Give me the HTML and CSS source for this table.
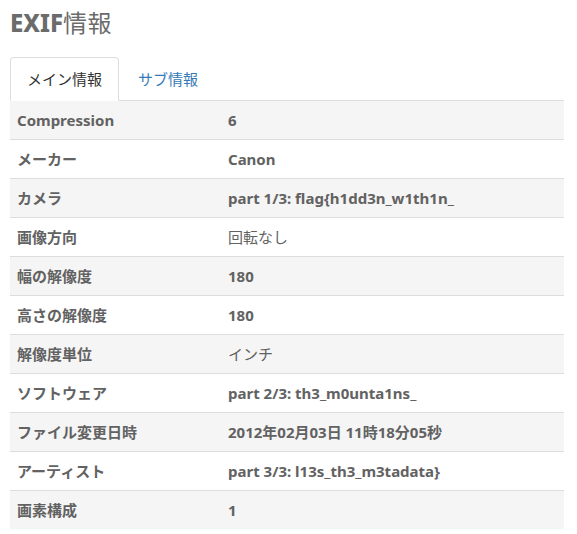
FILE: index.html
```html
<!DOCTYPE html>
<html lang="ja">
<head>
<meta charset="utf-8">
<link rel="stylesheet" href="styles.css">
</head>
<body>
<div class="page">
  <h2 class="title"><span class="latin">EXIF</span><span class="cjk">情報</span></h2>
  <ul class="tabs">
    <li class="tab active">メイン情報</li>
    <li class="tab link">サブ情報</li>
  </ul>
  <div class="table">
    <div class="row"><div class="k">Compression</div><div class="v">6</div></div>
    <div class="row"><div class="k">メーカー</div><div class="v">Canon</div></div>
    <div class="row"><div class="k">カメラ</div><div class="v">part 1/3: flag{h1dd3n_w1th1n_</div></div>
    <div class="row"><div class="k">画像方向</div><div class="v light">回転なし</div></div>
    <div class="row"><div class="k">幅の解像度</div><div class="v">180</div></div>
    <div class="row"><div class="k">高さの解像度</div><div class="v">180</div></div>
    <div class="row"><div class="k">解像度単位</div><div class="v light">インチ</div></div>
    <div class="row"><div class="k">ソフトウェア</div><div class="v">part 2/3: th3_m0unta1ns_</div></div>
    <div class="row"><div class="k">ファイル変更日時</div><div class="v">2012年02月03日 11時18分05秒</div></div>
    <div class="row"><div class="k">アーティスト</div><div class="v">part 3/3: l13s_th3_m3tadata}</div></div>
    <div class="row"><div class="k">画素構成</div><div class="v">1</div></div>
  </div>
</div>
</body>
</html>
```
FILE: styles.css
```css
html, body {
  margin: 0;
  padding: 0;
  background: #fff;
}
body {
  font-family: "Noto Sans", "Noto Sans CJK JP", sans-serif;
  color: #666;
}
.page {
  width: 554px;
  margin: 0 0 0 10px;
}
.title {
  margin: 0;
  height: 57px;
  padding-top: 4px;
  box-sizing: border-box;
  font-size: 24px;
  line-height: 36px;
  color: #6b6b6b;
}
.title .latin {
  font-weight: 800;
}
.title .cjk {
  font-weight: 400;
  font-family: "Noto Sans CJK JP", sans-serif;
  letter-spacing: 0.5px;
}
.tabs {
  list-style: none;
  margin: 0;
  padding: 0;
  display: flex;
  border-bottom: 1px solid #ddd;
}
.tab {
  font-family: "Noto Sans CJK JP", sans-serif;
  font-size: 15px;
  line-height: 21px;
  padding: 10px 16px 11px 16px;
  margin-right: 2px;
  margin-bottom: -1px;
  border: 1px solid transparent;
  border-radius: 4px 4px 0 0;
}
.tab.active {
  color: #333;
  background: #fff;
  border-color: #ddd;
  border-bottom-color: #fff;
}
.tab.link {
  color: #337ab7;
}
.table {
  display: flex;
  flex-direction: column;
}
.row {
  display: grid;
  grid-template-columns: 218px 1fr;
  border-top: 1px solid #ddd;
  font-size: 15px;
  line-height: 22px;
  font-weight: 700;
  color: #626262;
}
.row:first-child {
  border-top: 0;
}
.row:nth-child(odd) {
  background: #f5f5f5;
}
.k, .v {
  padding: 8px 7px 8px 7px;
  white-space: nowrap;
}
.v {
  padding-left: 0;
}
.v.light {
  font-weight: 400;
}
```
